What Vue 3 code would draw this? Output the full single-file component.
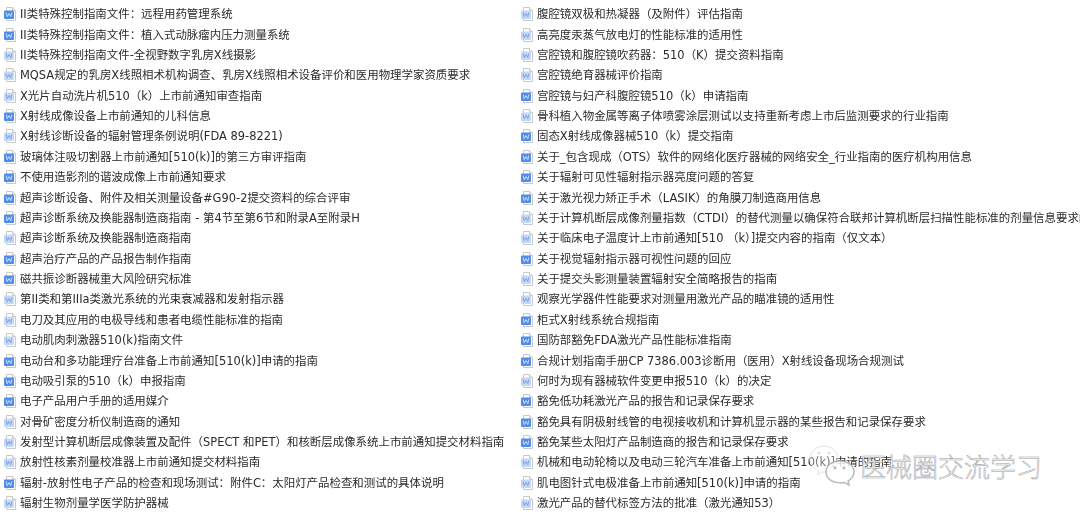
<script setup>
const left = [
  ['II类特殊控制指南文件：远程用药管理系统', 'd'],
  ['II类特殊控制指南文件：植入式动脉瘤内压力测量系统', 'd'],
  ['II类特殊控制指南文件-全视野数字乳房X线摄影', 'l'],
  ['MQSA规定的乳房X线照相术机构调查、乳房X线照相术设备评价和医用物理学家资质要求', 'l'],
  ['X光片自动洗片机510（k）上市前通知审查指南', 'l'],
  ['X射线成像设备上市前通知的儿科信息', 'd'],
  ['X射线诊断设备的辐射管理条例说明(FDA 89-8221)', 'l'],
  ['玻璃体注吸切割器上市前通知[510(k)]的第三方审评指南', 'd'],
  ['不使用造影剂的谐波成像上市前通知要求', 'd'],
  ['超声诊断设备、附件及相关测量设备#G90-2提交资料的综合评审', 'd'],
  ['超声诊断系统及换能器制造商指南 - 第4节至第6节和附录A至附录H', 'd'],
  ['超声诊断系统及换能器制造商指南', 'l'],
  ['超声治疗产品的产品报告制作指南', 'd'],
  ['磁共振诊断器械重大风险研究标准', 'd'],
  ['第II类和第IIIa类激光系统的光束衰减器和发射指示器', 'l'],
  ['电刀及其应用的电极导线和患者电缆性能标准的指南', 'l'],
  ['电动肌肉刺激器510(k)指南文件', 'l'],
  ['电动台和多功能理疗台准备上市前通知[510(k)]申请的指南', 'd'],
  ['电动吸引泵的510（k）申报指南', 'd'],
  ['电子产品用户手册的适用媒介', 'd'],
  ['对骨矿密度分析仪制造商的通知', 'l'],
  ['发射型计算机断层成像装置及配件（SPECT 和PET）和核断层成像系统上市前通知提交材料指南', 'l'],
  ['放射性核素剂量校准器上市前通知提交材料指南', 'l'],
  ['辐射-放射性电子产品的检查和现场测试：附件C：太阳灯产品检查和测试的具体说明', 'd'],
  ['辐射生物剂量学医学防护器械', 'l'],
]
const right = [
  ['腹腔镜双极和热凝器（及附件）评估指南', 'l'],
  ['高亮度汞蒸气放电灯的性能标准的适用性', 'l'],
  ['宫腔镜和腹腔镜吹药器：510（K）提交资料指南', 'l'],
  ['宫腔镜绝育器械评价指南', 'l'],
  ['宫腔镜与妇产科腹腔镜510（k）申请指南', 'd'],
  ['骨科植入物金属等离子体喷雾涂层测试以支持重新考虑上市后监测要求的行业指南', 'l'],
  ['固态X射线成像器械510（k）提交指南', 'd'],
  ['关于_包含现成（OTS）软件的网络化医疗器械的网络安全_行业指南的医疗机构用信息', 'd'],
  ['关于辐射可见性辐射指示器亮度问题的答复', 'd'],
  ['关于激光视力矫正手术（LASIK）的角膜刀制造商用信息', 'd'],
  ['关于计算机断层成像剂量指数（CTDI）的替代测量以确保符合联邦计算机断层扫描性能标准的剂量信息要求的', 'l'],
  ['关于临床电子温度计上市前通知[510 （k）]提交内容的指南（仅文本）', 'l'],
  ['关于视觉辐射指示器可视性问题的回应', 'd'],
  ['关于提交头影测量装置辐射安全简略报告的指南', 'l'],
  ['观察光学器件性能要求对测量用激光产品的瞄准镜的适用性', 'l'],
  ['柜式X射线系统合规指南', 'd'],
  ['国防部豁免FDA激光产品性能标准指南', 'd'],
  ['合规计划指南手册CP 7386.003诊断用（医用）X射线设备现场合规测试', 'd'],
  ['何时为现有器械软件变更申报510（k）的决定', 'l'],
  ['豁免低功耗激光产品的报告和记录保存要求', 'd'],
  ['豁免具有阴极射线管的电视接收机和计算机显示器的某些报告和记录保存要求', 'd'],
  ['豁免某些太阳灯产品制造商的报告和记录保存要求', 'd'],
  ['机械和电动轮椅以及电动三轮汽车准备上市前通知[510(k)]申请的指南', 'l'],
  ['肌电图针式电极准备上市前通知[510(k)]申请的指南', 'l'],
  ['激光产品的替代标签方法的批准（激光通知53）', 'l'],
]
const columns = [left, right]
</script>

<template>
  <div class="page">
    <div v-for="(col, c) in columns" :key="c" class="col">
      <div v-for="(item, i) in col" :key="i" class="row">
        <svg class="ico" :class="item[1]" width="14" height="16" viewBox="0 0 14 16">
          <path class="sheet" d="M3.5 1.5h6l3 3v10h-9z" />
          <path class="fold" d="M9.5 1.5v3h3" />
          <rect class="badge" x="1" y="4.5" width="10" height="8.5" rx="1" />
          <path class="w" d="M3.2 6.6l1 4 1.8-3 1.8 3 1-4" />
        </svg>
        <span class="label">{{ item[0] }}</span>
      </div>
    </div>
    <div class="mark">
      <svg class="bubbles" width="50" height="44" viewBox="0 0 50 44">
        <path class="b1" d="M16 2c8 0 14 6 14 13 0 8-6 13-14 13h-2l-4 3 .5-4.500C5 24 2 20 2 15 2 8 8 2 16 2z" />
        <circle class="dot1" cx="11" cy="9" r="1.300" />
        <circle class="dot1" cx="21" cy="9" r="1.300" />
        <path class="b2" d="M32 17c8 0 14 4.500 14 11 0 4-2.500 7-6 9l1 4-4.500-2.500C27 40 18 36 18 28c0-6.500 6-11 14-11z" />
        <circle class="dot" cx="27" cy="24" r="1.400" />
        <circle class="dot" cx="36" cy="24" r="1.400" />
      </svg>
      <span class="mark-text">医械圈交流学习</span>
    </div>
  </div>
</template>

<style scoped>
.page {
  position: relative;
  width: 1080px;
  height: 516px;
  overflow: hidden;
  background: #fff;
  display: grid;
  grid-template-columns: 517px 563px;
  padding-top: 4px;
  box-sizing: border-box;
  font-family: "DejaVu Sans", "Noto Sans CJK SC", sans-serif;
  font-size: 11.45px;
  color: #2b2b2b;
}
.col {
  display: flex;
  flex-direction: column;
  min-width: 0;
}
.row {
  height: 20.375px;
  display: flex;
  align-items: center;
  gap: 2px;
  padding-left: 3px;
  white-space: nowrap;
}
.ico {
  flex: none;
  margin-right: 1px;
}
.sheet {
  fill: #fff;
  stroke: #c9c9c9;
  stroke-width: 1;
}
.fold {
  fill: #f2f2f2;
  stroke: #c9c9c9;
  stroke-width: 1;
}
.badge {
  fill: #c4d8f6;
}
.d .badge {
  fill: #4f8cec;
}
.w {
  fill: none;
  stroke: #6f9be0;
  stroke-width: 0.9;
}
.d .w {
  stroke: #dce9fb;
}
.label {
  line-height: 20px;
  filter: blur(0.3px);
}
.mark {
  position: absolute;
  left: 808px;
  top: 444px;
  display: flex;
  align-items: center;
}
.bubbles {
  flex: none;
  margin-right: 2px;
}
.b1 {
  fill: rgba(255, 255, 255, 0.35);
  stroke: #e4e4e4;
  stroke-width: 1;
}
.b2 {
  fill: rgba(255, 255, 255, 0.8);
  stroke: #b5b5b5;
  stroke-width: 1.4;
}
.dot {
  fill: #b5b5b5;
}
.dot1 {
  fill: #d8d8d8;
}
.mark-text {
  font-family: "Noto Sans CJK SC", sans-serif;
  font-weight: 300;
  font-size: 26px;
  line-height: 30px;
  color: #fff;
  -webkit-text-stroke: 0.5px #9c9c9c;
}
</style>
